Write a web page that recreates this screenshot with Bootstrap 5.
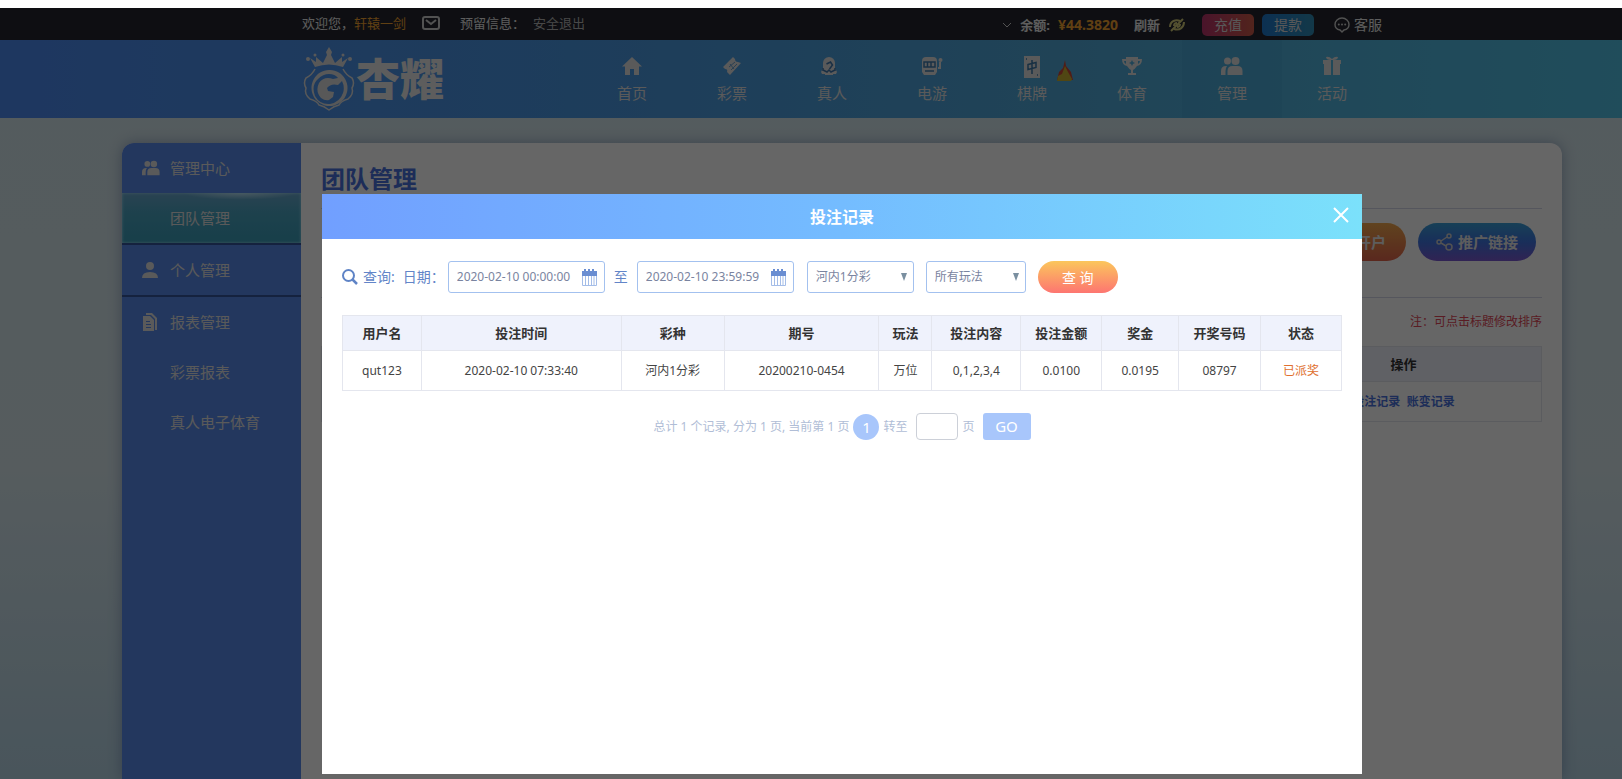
<!DOCTYPE html>
<html lang="zh-CN">
<head>
<meta charset="utf-8">
<meta name="viewport" content="width=device-width, initial-scale=1">
<title>杏耀 - 投注记录</title>
<link rel="stylesheet" href="https://cdn.jsdelivr.net/npm/bootstrap@5.3.0/dist/css/bootstrap.min.css">
<style>
  body { font: 13px/20px "Noto Sans", "Noto Sans CJK SC", sans-serif; background: #fff; padding-top: 8px; }
  a { text-decoration: none; }
  svg { display: block; flex: none; }
  .site { position: relative; min-height: calc(100vh - 8px); overflow: hidden; padding-left: 62px;
    background: linear-gradient(#d2e4ea, #d6e6ec 60%, #b6d4e4); }
  .full-strip { margin-left: -62px; padding-left: 62px; }
  .inner { max-width: 1080px; margin: 0 auto; }
  .topbar { background: #23252d; color: #e8e8e8; height: 32px; }
  .topbar .inner { height: 30px; }
  .gold { color: #f0a030; }
  .dull { color: #b4b4b4; }
  .pill { width: 52px; height: 22px; border-radius: 5px; padding: 0; color: #ddd; font-size: 14px; line-height: 20px; border: 0; }
  .pill-red { background: linear-gradient(90deg, #b8336b, #cc5a48); }
  .pill-blue { background: linear-gradient(90deg, #1f78cc, #2f8cb4); }
  .mainbar { background: linear-gradient(90deg, #4d8af0, #4a98e4 35%, #50a8d8 65%, #50c0e4); height: 78px; }
  .brand-word { font-size: 44px; line-height: 62px; font-weight: 900; color: #e8e8e8; }
  .mainnav a { width: 100px; height: 78px; padding-top: 16px; font-size: 15px; line-height: 24px; color: #e0e0e0; gap: 5px; position: relative; }
  .mainnav a.current { background: rgba(60, 140, 190, .15); }
  .flame { position: absolute; left: 74px; top: 20px; }
  .panel { max-width: 1440px; margin: 25px auto 0; min-height: 636px; border-radius: 12px 12px 0 0; background: #fff; box-shadow: 0 0 14px rgba(70, 90, 140, .45); overflow: hidden; }
  .side { width: 179px; background: #588aea; flex: none; }
  .side a { height: 50px; padding-left: 20px; gap: 10px; color: #e0e0e0; font-size: 15px; }
  .side .group + .group { border-top: 2px solid #35559c; }
  .side .ico { width: 18px; }
  .side a.current { background: radial-gradient(ellipse at 66% 0, #b4dcf0 0, transparent 34%) top / 100% 14px no-repeat, linear-gradient(#68a6cc, #4aa4c0 40%, #3a9cb8); box-shadow: inset 0 0 3px #a6dff2; }
  .content { padding: 20px 20px 0; }
  .content h1 { font-size: 24px; line-height: 32px; font-weight: 700; color: #4a72dc; margin: 0; }
  .ruled { border-bottom: 1px solid #d4d8e8; }
  .round-btn { border: 0; border-radius: 20px; height: 38px; color: #e8e8e8; font-size: 15px; font-weight: 700; padding: 0; }
  .orange-btn { width: 116px; padding-left: 46px; background: linear-gradient(#f0a84e, #e0644c); }
  .share-btn { width: 118px; background: linear-gradient(#3aa0d8, #3f74e0 50%, #7a58d0); }
  .note { font-size: 12px; color: #e04858; }
  .grid { margin: 0; text-align: center; color: #444; font-size: 12px; table-layout: fixed; border-color: #e4e6ee; }
  .grid th { background: #eff2fc; height: 35px; padding: 0; font-size: 13px; color: #333; font-weight: 700; vertical-align: middle; }
  .grid td { height: 40px; padding: 0; vertical-align: middle; }
  .shade { position: absolute; inset: 0; background: rgba(0, 0, 0, .6); padding: 186px 0 0 62px; }
  .dialog-box { max-width: 1040px; min-height: 580px; margin: 0 auto; background: #fff; }
  .dialog-head { height: 45px; background: linear-gradient(90deg, #719fff, #74bcff 50%, #7be1fb); color: #fff; position: relative; }
  .dialog-head h2 { font-size: 16px; line-height: 46px; font-weight: 700; margin: 0; }
  .close-x { position: absolute; right: 12px; top: 12px; background: none; border: 0; padding: 0; }
  .dialog-main { padding: 22px 20px 0; }
  .filters { color: #6285c8; font-size: 14px; }
  .field { width: 157px; height: 32px; border: 1px solid #a3c1ef; border-radius: 3px; padding: 0 7px 0 8px; }
  .field input { border: 0; outline: 0; padding: 0; min-width: 0; width: 118px; font-size: 12px; color: #7a84a0; background: none; }
  .picker { width: 107px; height: 32px; border: 1px solid #a3c1ef; border-radius: 3px; padding: 0 20px 0 8px; font-size: 12px; color: #7a84a0;
    background-image: url("data:image/svg+xml,%3Csvg xmlns='http://www.w3.org/2000/svg' viewBox='0 0 6 8'%3E%3Cpath d='M0 0h6L3 8z' fill='%237a8fa0'/%3E%3C/svg%3E"); background-size: 6px 8px; background-position: right 6px center; }
  .picker.narrow { width: 100px; }
  .query-btn { width: 80px; height: 32px; border: 0; border-radius: 16px; padding: 0; color: #fff; font-size: 14px; background: linear-gradient(#fbc65c, #fd7571); }
  .pager { color: #b0bdd6; font-size: 12px; }
  .pager .now { width: 26px; height: 26px; border-radius: 50%; background: #a8c6fb; color: #fff; font-size: 15px; line-height: 26px; text-align: center; }
  .pager input { width: 42px; height: 27px; border: 1px solid #ccd0d8; border-radius: 4px; padding: 0 4px; }
  .pager button { width: 48px; height: 27px; border: 0; border-radius: 3px; background: #a8c6fb; color: #fff; font-size: 15px; padding: 0; }
  .paid { color: #e07030 !important; }
</style>
</head>
<body>
<svg width="0" height="0" class="position-absolute" aria-hidden="true">
  <symbol id="people" viewBox="0 0 22 18"><circle cx="6.500" cy="4" r="3.500"/><circle cx="14.500" cy="4" r="4"/><path d="M0 18v-4q0-5 5-5h1Q4.500 11 4.500 14v4zM6.500 18v-4q0-5 5-5h5q5 0 5 5v4z"/></symbol>
</svg>

<div class="site">
  <header class="full-strip topbar">
    <div class="inner d-flex align-items-center">
      <span>欢迎您，<a href="#" class="gold">轩辕一剑</a></span>
      <a href="#" class="ms-3" aria-label="消息"><svg width="18" height="14" fill="none" stroke="#ccc" stroke-width="2"><rect x="1" y="1" width="16" height="12" rx="2"/><path d="M4 4l5 4 5-4"/></svg></a>
      <span style="margin-left:20px">预留信息：</span>
      <a href="#" class="dull ms-2">安全退出</a>
      <div class="ms-auto d-flex align-items-center pt-1">
        <svg width="10" height="6" fill="none" stroke="#ccc"><path d="M1 1l4 4 4-4"/></svg>
        <b class="ms-2">余额:</b>
        <b class="gold ms-2" style="font-size:14px">¥44.3820</b>
        <a href="#" class="fw-bold ms-3" style="color:#e8e8e8">刷新</a>
        <svg class="ms-2 me-3" width="18" height="14" fill="none" stroke="#cfc878" stroke-width="2"><path d="M2 9C2 3 8 1 12 3M6 11c6 2 10-2 10-7"/><path d="M6 8q0-3 3-3M9 9q3 0 3-3M3 13L15 1"/></svg>
        <button type="button" class="btn pill pill-red me-2">充值</button>
        <button type="button" class="btn pill pill-blue">提款</button>
        <a href="#" class="d-flex align-items-center gap-1" style="margin-left:20px;font-size:14px;color:#e8e8e8">
          <svg width="16" height="16" fill="none" stroke="#ccc"><path d="M8 15l-2-2Q1 12 1 7.500A7 6.500 0 0 1 15 7.500Q15 12 10 13z" stroke-width="1.400"/><g fill="#ccc" stroke="none"><circle cx="4.800" cy="7.500" r="1"/><circle cx="8" cy="7.500" r="1"/><circle cx="11.200" cy="7.500" r="1"/></g></svg>客服</a>
      </div>
    </div>
  </header>

  <div class="full-strip mainbar">
    <div class="inner d-flex">
      <a href="#" class="d-flex">
        <svg width="54" height="78" viewBox="0 0 54 78" fill="#dcdcdc" aria-hidden="true">
          <path d="M13 27L8 18l6 4 0-5 7 6 4-8-1-3 3-5 3 5-1 3 4 8 7-6 0 5 6-4-5 9q-14-5-28 0z"/><circle cx="6" cy="19" r="2"/><circle cx="48" cy="19" r="2"/><circle cx="13" cy="15" r="1.500"/><circle cx="41" cy="15" r="1.500"/>
          <path d="M13 29Q10 35 4 38q-3 5 0 10-2 6 4 11 7 2 9 6 5 1 10 5 5-4 10-5 2-4 9-6 6-5 4-11 3-5 0-10-6-3-9-9" fill="none" stroke="#dcdcdc" stroke-width="1.500"/>
          <path fill-rule="evenodd" d="M27 30a18 18 0 1 0 1 0zM27 34q6 0 9 4l-5 1q-9-3-14 4-4 8 2 15 4 3 8 2l4-3 1-5-6-1-1-3q4-5 11-3l4-4q3 6 1 12-3 9-13 11-10 1-15-8-4-11 3-17 5-5 11-5z"/>
        </svg>
        <span class="brand-word pt-2">杏耀</span>
      </a>
      <nav class="mainnav d-flex ms-auto">
        <a href="#" class="d-flex flex-column align-items-center"><svg width="20" height="20" fill="#e0e0e0"><path d="M10 1L0 10.500h3V19h5v-6h4v6h5v-8.500h3z"/></svg>首页</a>
        <a href="#" class="d-flex flex-column align-items-center"><svg width="20" height="20"><path d="M11 1l2 2q0 3 3 3l3 1L8 19l-3-3q1-3-2-3l-2-2z" fill="#e0e0e0"/><path d="M7 11l6-5M9 14l6-6M8 8l4 5" stroke="#6aa0d0" fill="none"/></svg>彩票</a>
        <a href="#" class="d-flex flex-column align-items-center" style="padding-right:6px"><svg width="20" height="20"><path d="M4 12V7a6 6 0 0 1 12 0v5l2 4-1 2h-3v1H6v-1H3l-1-2z" fill="#e0e0e0"/><path d="M7.500 8l4-2 2 3-3 4M4 14l4 2 2-2 2 2 4-2M4 12v3M16 12v3" fill="none" stroke="#3f77ac" stroke-width="1.500"/></svg><span style="margin-right:-6px">真人</span></a>
        <a href="#" class="d-flex flex-column align-items-center"><svg width="22" height="20"><path d="M1 5q0-4 4-4h7q4 0 4 4v11l-2 3H3l-2-3z" fill="#e0e0e0"/><path d="M3 6h11v5H3zM6.500 6v5M10 6v5M4 15h9" fill="none" stroke="#407aad" stroke-width="1.500"/><path d="M17 12h2V6" fill="none" stroke="#e0e0e0" stroke-width="2"/><circle cx="19.500" cy="4" r="2" fill="#e0e0e0"/></svg>电游</a>
        <a href="#" class="d-flex flex-column align-items-center"><svg width="18" height="22"><rect x="1" width="16" height="22" fill="#e0e0e0"/><path d="M5 8.500l8-2v5l-8 2zM9 4v14M3 3h1M14 19h1" stroke="#3c78a8" stroke-width="1.500" fill="none"/></svg><svg class="flame" width="18" height="22"><path d="M9 0l1 6 5 6 2 8H1l2-8 4-4z" fill="#c84838"/><path d="M9 6l3 6 4 7-1 2H1l1-5 4-2z" fill="#c8b030"/></svg><span style="margin-top:-2px">棋牌</span></a>
        <a href="#" class="d-flex flex-column align-items-center"><svg width="20" height="20" fill="#e0e0e0"><path fill-rule="evenodd" d="M4 1h12v2h4q0 6-5 7-2 3-4 4v3h3v2H6v-2h3v-3q-2-1-4-4-5-1-5-7h4zm0 4H2q0 2 2 3zm12 0v3q2-1 2-3zm-6-1l-1 2-2 1 2 1 1 2 1-2 2-1-2-1z"/></svg>体育</a>
        <a href="#" class="d-flex flex-column align-items-center current"><svg width="22" height="20" fill="#e0e0e0"><use href="#people"/></svg>管理</a>
        <a href="#" class="d-flex flex-column align-items-center"><svg width="20" height="20" fill="#e0e0e0"><path d="M1 4h8v4H1zM11 4h8v4h-8zM2 8h7v11H2zM11 8h7v11h-7zM9 4Q4 4 4 1q3-1 6 2 3-3 6-2 0 3-5 3z"/></svg>活动</a>
      </nav>
    </div>
  </div>

  <div class="panel d-flex">
    <aside class="side">
      <div class="group">
        <a href="#" class="d-flex align-items-center"><svg class="ico" height="16" fill="#e0e0e0"><use href="#people"/></svg>管理中心</a>
        <a href="#" class="d-flex align-items-center current"><span class="ico"></span>团队管理</a>
      </div>
      <div class="group">
        <a href="#" class="d-flex align-items-center"><svg class="ico" height="16" fill="#e0e0e0"><circle cx="8" cy="4" r="4"/><path d="M0 16q0-6 8-6t8 6z"/></svg>个人管理</a>
      </div>
      <div class="group">
        <a href="#" class="d-flex align-items-center"><svg class="ico" height="18" fill="#e0e0e0"><path d="M4 0h6l5 5v12h-2V6L9 2H4z"/><path fill-rule="evenodd" d="M1 3h7l4 4v11H1zm3 5v1h4V8zm0 3v1h5v-1zm0 3v1h5v-1z"/></svg>报表管理</a>
        <a href="#" class="d-flex align-items-center"><span class="ico"></span>彩票报表</a>
        <a href="#" class="d-flex align-items-center"><span class="ico"></span>真人电子体育</a>
      </div>
    </aside>
    <main class="content flex-grow-1">
      <div class="ruled" style="height:46px"><h1>团队管理</h1></div>
      <div class="ruled d-flex justify-content-end" style="height:89px;padding:14px 6px 0 0;gap:12px">
        <button type="button" class="btn round-btn orange-btn">开户</button>
        <button type="button" class="btn round-btn share-btn d-flex align-items-center justify-content-center gap-1"><svg width="18" height="18" fill="none" stroke="#ccc" stroke-width="1.500"><circle cx="3" cy="9" r="2"/><circle cx="13" cy="3" r="2"/><circle cx="13" cy="14" r="3"/><path d="M5 8l6-4M5 10l5 3"/></svg>推广链接</button>
      </div>
      <p class="note text-end mb-0" style="padding:14px 0">注：可点击标题修改排序</p>
      <table class="table table-bordered grid">
        <thead><tr><th></th><th style="width:276px">操作</th></tr></thead>
        <tbody><tr><td></td><td class="fw-bold"><a href="#" style="color:#4a72dc">投注记录</a> &nbsp;<a href="#" style="color:#4a72dc">账变记录</a></td></tr></tbody>
      </table>
    </main>
  </div>

  <div class="shade">
    <section class="dialog-box" role="dialog" aria-labelledby="dlg-title">
      <div class="dialog-head text-center">
        <h2 id="dlg-title">投注记录</h2>
        <button type="button" class="close-x" aria-label="关闭"><svg width="18" height="18" stroke="#fff" stroke-width="2"><path d="M2 2l14 14M16 2L2 16"/></svg></button>
      </div>
      <div class="dialog-main">
        <form class="filters d-flex align-items-center">
          <svg width="16" height="16" fill="none" stroke="#5f84c6" stroke-width="2"><circle cx="6.500" cy="6.500" r="5.500"/><path d="M10.500 10.500L15 15" stroke-width="2.500"/></svg>
          <span style="margin-left:5px">查询:</span>
          <label for="from" class="ms-2">日期：</label>
          <span class="field d-flex align-items-center justify-content-between" style="margin-left:3px"><input id="from" type="text" value="2020-02-10 00:00:00">
            <svg width="15" height="17"><path d="M0 2h2V0h2v2h2V0h2v2h2V0h2v2h3v5H0z" fill="#6a8ed2"/><path d="M.5 7v9.500h14V7M3.500 7v9M6.500 7v9M9.500 7v9M12 7v9" fill="none" stroke="#a4bde8"/></svg></span>
          <label for="to" style="margin:0 9px">至</label>
          <span class="field d-flex align-items-center justify-content-between"><input id="to" type="text" value="2020-02-10 23:59:59">
            <svg width="15" height="17"><path d="M0 2h2V0h2v2h2V0h2v2h2V0h2v2h3v5H0z" fill="#6a8ed2"/><path d="M.5 7v9.500h14V7M3.500 7v9M6.500 7v9M9.500 7v9M12 7v9" fill="none" stroke="#a4bde8"/></svg></span>
          <select class="form-select picker" style="margin:0 12px 0 13px" aria-label="彩种"><option>河内1分彩</option></select>
          <select class="form-select picker narrow" aria-label="玩法"><option>所有玩法</option></select>
          <button type="button" class="btn query-btn" style="margin-left:12px">查 询</button>
        </form>
        <table class="table table-bordered grid" style="margin-top:22px">
          <colgroup><col style="width:7.900%"><col style="width:20%"><col style="width:10.300%"><col style="width:15.500%"><col style="width:5.300%"><col style="width:8.900%"><col style="width:8.100%"><col style="width:7.700%"><col style="width:8.200%"><col style="width:8.100%"></colgroup>
          <thead><tr><th>用户名</th><th>投注时间</th><th>彩种</th><th>期号</th><th>玩法</th><th>投注内容</th><th>投注金额</th><th>奖金</th><th>开奖号码</th><th>状态</th></tr></thead>
          <tbody><tr><td>qut123</td><td>2020-02-10 07:33:40</td><td>河内1分彩</td><td>20200210-0454</td><td>万位</td><td>0,1,2,3,4</td><td>0.0100</td><td>0.0195</td><td>08797</td><td class="paid">已派奖</td></tr></tbody>
        </table>
        <div class="pager d-flex align-items-center justify-content-center" style="margin-top:22px">
          <span>总计 1 个记录, 分为 1 页, 当前第 1 页</span>
          <span class="now mx-1">1</span>
          <label for="goto">转至</label>
          <input id="goto" type="text" class="ms-2" style="margin-right:5px">
          <span>页</span>
          <button type="button" class="btn ms-2">GO</button>
        </div>
      </div>
    </section>
  </div>
</div>
<script src="https://cdn.jsdelivr.net/npm/bootstrap@5.3.0/dist/js/bootstrap.bundle.min.js"></script>
</body>
</html>
